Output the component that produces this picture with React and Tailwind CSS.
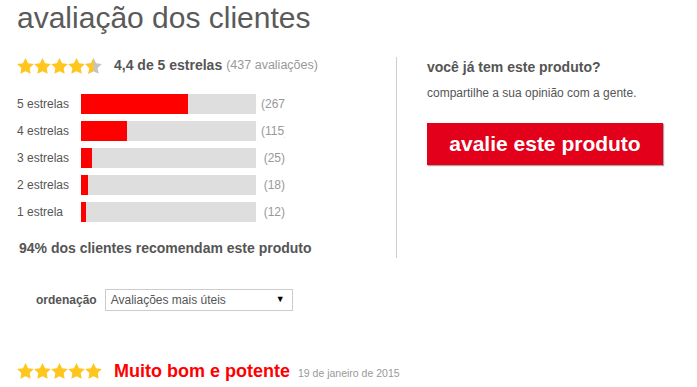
import React from "react";

const STAR = "12,2 15.09,8.26 22,9.27 17,14.14 18.18,21.02 12,17.77 5.82,21.02 7,14.14 2,9.27 8.91,8.26";

const Star = ({ fill = 1, id }) => (
    <svg width="17" height="16" viewBox="2 2 20 19.2">
        {fill < 1 && (
            <defs>
                <clipPath id={id}>
                    <rect x="0" y="0" width={2 + 20 * fill} height="24" />
                </clipPath>
            </defs>
        )}
        <polygon points={STAR} fill={fill < 1 ? "#c4c4c4" : "#ffc61e"} />
        {fill < 1 && <polygon points={STAR} fill="#ffc61e" clipPath={`url(#${id})`} />}
    </svg>
);

const Stars = ({ value }) => (
    <div className="flex">
        {[0, 1, 2, 3, 4].map((i) => (
            <Star key={i} id={`half-${i}`} fill={Math.max(0, Math.min(1, value - i))} />
        ))}
    </div>
);

const rows = [
    { label: "5 estrelas", fill: 107, count: "(267)" },
    { label: "4 estrelas", fill: 46, count: "(115)" },
    { label: "3 estrelas", fill: 11, count: "(25)" },
    { label: "2 estrelas", fill: 7, count: "(18)" },
    { label: "1 estrela", fill: 5, count: "(12)" },
];

const App = () => {
    return (
        <div
            className="w-[697px] h-[387px] overflow-hidden bg-white pl-[17px] text-[#555]"
            style={{ fontFamily: '"Liberation Sans", Arial, sans-serif' }}
        >
            <h1 className="mt-[1px] text-[30px] leading-[34px] text-[#5a5a5a]">avaliação dos clientes</h1>

            <div className="mt-[22px] flex">
                {/* resumo das notas */}
                <div className="w-[380px] border-r border-[#cfcfcf] pb-[1px]">
                    <div className="flex h-[17px] items-center">
                        <Stars value={4.5} />
                        <span className="ml-[12px] text-[14px] font-bold">4,4 de 5 estrelas</span>
                        <span className="ml-[4px] text-[12.5px] text-[#999]">(437 avaliações)</span>
                    </div>

                    <div className="mt-[20px] flex flex-col gap-[7px]">
                        {rows.map((r) => (
                            <div key={r.label} className="flex h-[20px] items-center text-[12px]">
                                <span className="w-[64px]">{r.label}</span>
                                <div className="h-[20px] w-[175px] bg-[#dedede]">
                                    <div className="h-full bg-[#ff0000]" style={{ width: r.fill }} />
                                </div>
                                <span className="ml-[5px] w-[24px] overflow-hidden whitespace-nowrap text-right text-[#999]">
                                    {r.count}
                                </span>
                            </div>
                        ))}
                    </div>

                    <p className="mt-[17px] pl-[2px] text-[14px] font-bold leading-[18px]">
                        94% dos clientes recomendam este produto
                    </p>
                </div>

                {/* chamada para avaliar */}
                <div className="pl-[30px]">
                    <p className="mt-[2px] text-[14px] font-bold leading-[17px]">você já tem este produto?</p>
                    <p className="mt-[10px] text-[12px] leading-[15px]">compartilhe a sua opinião com a gente.</p>
                    <button className="mt-[22px] flex h-[42px] w-[236px] items-center justify-center bg-[#e2001a] text-[21px] font-bold text-white shadow-[1px_1px_1px_rgba(0,0,0,0.35)]">
                        avalie este produto
                    </button>
                </div>
            </div>

            <div className="mt-[31px] flex items-center text-[12px]">
                <span className="ml-[19px] font-bold">ordenação</span>
                <div className="ml-[8px] flex h-[22px] w-[188px] items-center justify-between border border-[#ccc] pl-[5px] pr-[7px]">
                    <span>Avaliações mais úteis</span>
                    <span className="text-[9px] text-black">▼</span>
                </div>
            </div>

            <div className="mt-[48px] flex h-[24px] items-center">
                <Stars value={5} />
                <div className="ml-[12px] flex items-baseline">
                    <span className="text-[18px] font-bold text-[#ff0000]">Muito bom e potente</span>
                    <span className="ml-[8px] text-[10.5px] text-[#999]">19 de janeiro de 2015</span>
                </div>
            </div>
        </div>
    );
};

export default App;
